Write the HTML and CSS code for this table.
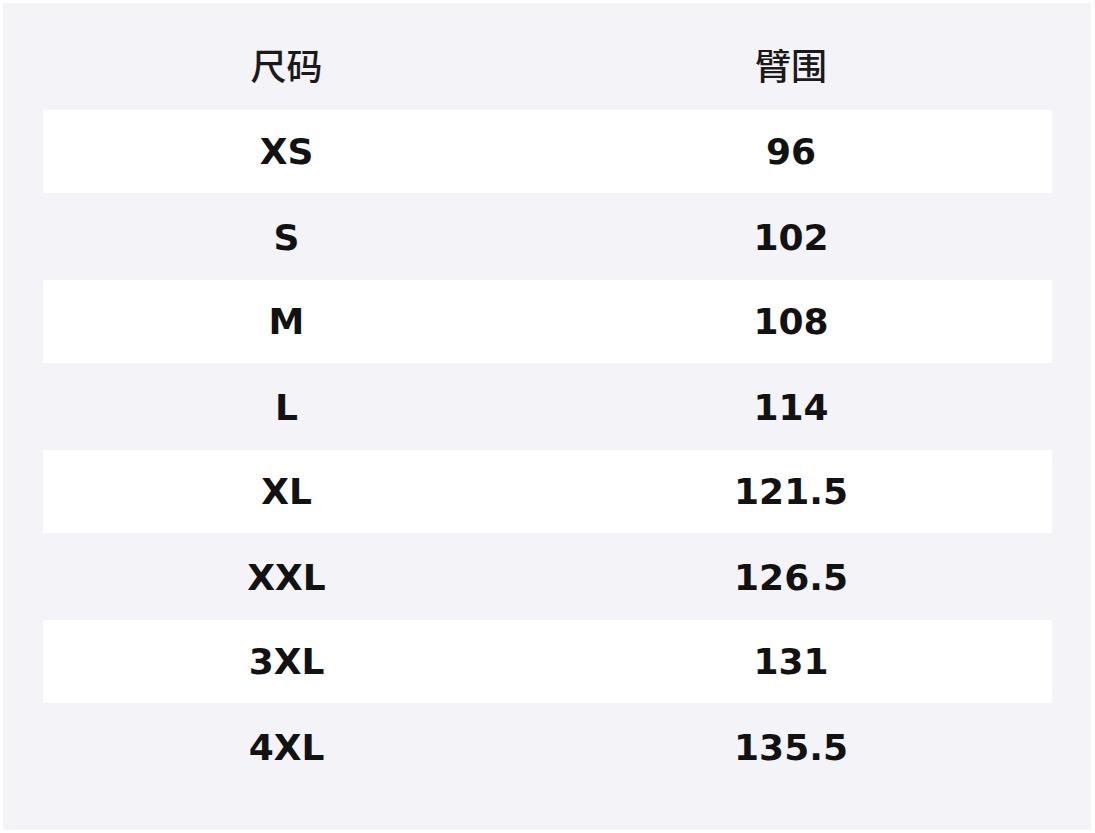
FILE: index.html
```html
<!DOCTYPE html>
<html lang="zh">
<head>
<meta charset="utf-8">
<link rel="stylesheet" href="styles.css">
</head>
<body>
<div class="panel">
  <div class="table">
    <div class="row head"><div class="cell">尺码</div><div class="cell">臂围</div></div>
    <div class="row odd"><div class="cell">XS</div><div class="cell">96</div></div>
    <div class="row"><div class="cell">S</div><div class="cell">102</div></div>
    <div class="row odd"><div class="cell">M</div><div class="cell">108</div></div>
    <div class="row"><div class="cell">L</div><div class="cell">114</div></div>
    <div class="row odd"><div class="cell">XL</div><div class="cell">121.5</div></div>
    <div class="row"><div class="cell">XXL</div><div class="cell">126.5</div></div>
    <div class="row odd"><div class="cell">3XL</div><div class="cell">131</div></div>
    <div class="row"><div class="cell">4XL</div><div class="cell">135.5</div></div>
  </div>
</div>
</body>
</html>
```
FILE: styles.css
```css
html, body { margin: 0; padding: 0; background: #ffffff; }
body { padding: 3px; width: 1095px; height: 833px; box-sizing: border-box; }
.panel {
  background: #f3f3f8;
  height: 827px;
  width: 1088px;
  box-sizing: border-box;
  padding: 22px 39px 40px 40px;
}
.table { display: flex; flex-direction: column; }
.row {
  display: grid;
  grid-template-columns: 487px 1fr;
  height: 85px;
  align-items: center;
  box-sizing: border-box;
}
.row.odd { background: #ffffff; border-bottom: 2px solid #f3f3f8; }
.cell {
  text-align: center;
  font-family: "DejaVu Sans", "Noto Sans CJK SC", sans-serif;
  font-weight: bold;
  font-size: 36px;
  color: #121212;
}
.head .cell {
  font-family: "Noto Sans CJK SC", sans-serif;
  font-weight: 500;
  font-size: 36px;
  color: #1a1a1a;
  padding-bottom: 8px;
}
```
